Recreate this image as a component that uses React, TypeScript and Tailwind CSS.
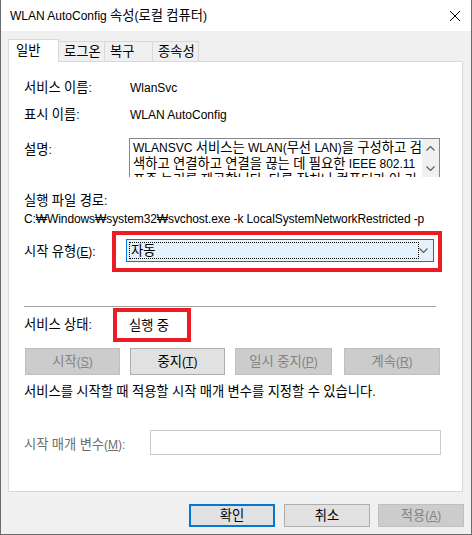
// Hangul runs get a slightly larger size so they take the width Malgun Gothic gives them
const T = ({ s }: { s: string }) => (
  <span>
    {s.split(/([\uAC00-\uD7A3]+)/).map((p, i) =>
      /[\uAC00-\uD7A3]/.test(p) ? (
        <span key={i} className="text-[13.3px]">
          {p}
        </span>
      ) : (
        p
      ),
    )}
  </span>
);

const Btn = ({
  children,
  disabled,
  primary,
  className = '',
}: {
  children: React.ReactNode;
  disabled?: boolean;
  primary?: boolean;
  className?: string;
}) => (
  <div
    className={
      'flex items-center justify-center leading-none ' +
      (disabled
        ? 'bg-[#cccccc] border border-[#bfbfbf] text-[#838383] '
        : primary
          ? 'bg-[#e1e1e1] border-2 border-[#0078d7] text-black '
          : 'bg-[#e1e1e1] border border-[#adadad] text-black ') +
      className
    }
  >
    <span>{children}</span>
  </div>
);

const Tab = ({ label, w, active }: { label: string; w: string; active?: boolean }) =>
  active ? (
    <div className={`${w} h-[23px] -mb-px relative z-10 bg-white border border-b-0 border-[#d9d9d9] pl-[7px] pt-[3px] leading-[16px]`}>
      <T s={label} />
    </div>
  ) : (
    <div className={`${w} h-[20px] bg-[#f0f0f0] border border-l-0 border-b-0 border-[#d9d9d9] pl-[5px] pt-[2px] leading-[16px]`}>
      <T s={label} />
    </div>
  );

export default function App() {
  return (
    <div className="w-[472px] h-[535px] flex flex-col bg-[#f0f0f0] border-x border-b border-[#6b6b6b] text-[12px] text-black font-['Liberation_Sans','Noto_Sans_CJK_KR',sans-serif] overflow-hidden">
      {/* title bar */}
      <div className="h-[31px] shrink-0 bg-white flex items-center justify-between pl-[9px] pr-[9px]">
        <span className="leading-[16px]">
          <T s="WLAN AutoConfig 속성(로컬 컴퓨터)" />
        </span>
        <svg width="12" height="12" viewBox="0 0 12 12" className="mr-[1px]">
          <path d="M1 1 L11 11 M11 1 L1 11" stroke="#000" strokeWidth="1" />
        </svg>
      </div>

      <div className="px-[7px] pt-[8px]">
        {/* tabs */}
        <div className="flex items-end h-[22px]">
          <Tab label="일반" w="w-[51px]" active />
          <Tab label="로그온" w="w-[46px]" />
          <Tab label="복구" w="w-[48px]" />
          <Tab label="종속성" w="w-[46px]" />
        </div>

        {/* panel */}
        <div className="w-[455px] h-[431px] bg-white border border-[#d9d9d9] pl-[15px] pr-[20px]">
          <div className="mt-[18px] flex h-[16px] items-center leading-[16px]">
            <span className="w-[106px]">
              <T s="서비스 이름:" />
            </span>
            <span>WlanSvc</span>
          </div>
          <div className="mt-[11px] flex h-[16px] items-center leading-[16px]">
            <span className="w-[106px]">
              <T s="표시 이름:" />
            </span>
            <span>WLAN AutoConfig</span>
          </div>

          <div className="mt-[15px] flex h-[39px]">
            <span className="w-[105px] pt-[4px] leading-[16px]">
              <T s="설명:" />
            </span>
            <div className="w-[311px] h-[39px] border-t border-x border-[#828790] flex overflow-hidden">
              <div className="flex-1 pl-[3px] pt-[1px] leading-[15px] whitespace-nowrap overflow-hidden">
                <div>
                  <T s="WLANSVC 서비스는 WLAN(무선 LAN)을 구성하고 검" />
                </div>
                <div>
                  <T s="색하고 연결하고 연결을 끊는 데 필요한 IEEE 802.11" />
                </div>
                <div>
                  <T s="표준 논리를 제공합니다. 다른 장치나 컴퓨터가 이 기" />
                </div>
              </div>
              <div className="w-[17px] bg-[#f0f0f0] flex flex-col items-center justify-between pt-[7px] pb-[6px]">
                <svg width="9" height="5" viewBox="0 0 9 5">
                  <path d="M0.5 4.5 L4.5 0.5 L8.5 4.5" stroke="#606060" fill="none" strokeWidth="1.2" />
                </svg>
                <svg width="9" height="5" viewBox="0 0 9 5">
                  <path d="M0.5 0.5 L4.5 4.5 L8.5 0.5" stroke="#606060" fill="none" strokeWidth="1.2" />
                </svg>
              </div>
            </div>
          </div>

          <div className="mt-[16px] h-[16px] leading-[16px]">
            <T s="실행 파일 경로:" />
          </div>
          <div className="mt-[2px] h-[16px] leading-[16px] whitespace-nowrap tracking-[-0.1px]">
            C:₩Windows₩system32₩svchost.exe -k LocalSystemNetworkRestricted -p
          </div>

          {/* start type */}
          <div className="mt-[4px] flex h-[41px] items-center">
            <span className="w-[91px] leading-[16px]">
              <T s="시작 유형" />(<u>E</u>):
            </span>
            <div className="w-[334px] h-[41px] border-4 border-[#ed1c24] pl-[10px] pr-[4px] pt-[4px]">
              <div className="h-[23px] border border-[#0078d7] bg-[#e5f1fb] flex items-center pl-[2px] pr-[5px]">
                <div className="w-[290px] h-[17px] border border-dotted border-black flex items-center pl-[1px] leading-[15px]">
                  <T s="자동" />
                </div>
                <div className="flex-1 flex justify-end">
                  <svg width="9" height="5" viewBox="0 0 9 5">
                    <path d="M0.5 0.5 L4.5 4.5 L8.5 0.5" stroke="#606060" fill="none" strokeWidth="1.2" />
                  </svg>
                </div>
              </div>
            </div>
          </div>

          <div className="mt-[34px] w-[412px] h-px bg-[#a0a0a0]" />

          {/* status */}
          <div className="mt-[1px] flex h-[34px] items-center">
            <span className="w-[89px] leading-[16px]">
              <T s="서비스 상태:" />
            </span>
            <div className="w-[78px] h-[34px] border-4 border-[#ed1c24] flex items-center pl-[12px] pt-[2px] leading-[16px]">
              <T s="실행 중" />
            </div>
          </div>

          {/* service buttons */}
          <div className="mt-[6px] flex h-[27px]">
            <Btn disabled className="ml-[1px] w-[95px]">
              <T s="시작" />(<u>S</u>)
            </Btn>
            <Btn className="ml-[10px] w-[95px]">
              <T s="중지" />(<u>T</u>)
            </Btn>
            <Btn disabled className="ml-[10px] w-[97px]">
              <T s="일시 중지" />(<u>P</u>)
            </Btn>
            <Btn disabled className="ml-[12px] w-[96px]">
              <T s="계속" />(<u>R</u>)
            </Btn>
          </div>

          <div className="mt-[9px] h-[16px] leading-[16px] whitespace-nowrap">
            <T s="서비스를 시작할 때 적용할 시작 매개 변수를 지정할 수 있습니다." />
          </div>

          <div className="mt-[30px] flex h-[25px] items-center">
            <span className="w-[126px] pt-[4px] leading-[16px] text-[#6d6d6d] whitespace-nowrap">
              <T s="시작 매개 변수" />(<u>M</u>):
            </span>
            <div className="w-[291px] h-[25px] border border-[#cccccc] bg-white" />
          </div>
        </div>

        {/* dialog buttons */}
        <div className="mt-[12px] flex h-[23px]">
          <Btn primary className="ml-[181px] w-[86px]">
            <T s="확인" />
          </Btn>
          <Btn className="ml-[9px] w-[86px]">
            <T s="취소" />
          </Btn>
          <Btn disabled className="ml-[8px] w-[86px]">
            <T s="적용" />(<u>A</u>)
          </Btn>
        </div>
      </div>
    </div>
  );
}
